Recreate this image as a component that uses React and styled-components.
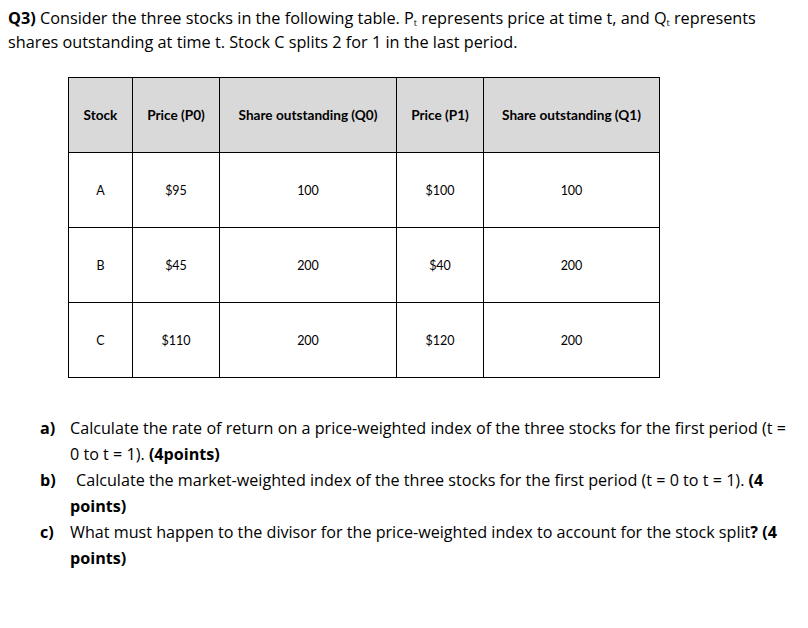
import React from 'react'
import styled, { createGlobalStyle } from 'styled-components'

const GlobalStyle = createGlobalStyle`
  html, body {
    margin: 0;
    padding: 0;
    background: #ffffff;
  }
  body {
    font-family: "Open Sans", Lato, sans-serif;
    color: #000;
  }
`

const Page = styled.div`
  width: 808px;
  height: 628px;
  padding: 6px 0 0 8px;
  box-sizing: border-box;
`

const Intro = styled.p`
  margin: 0;
  font-size: 16.25px;
  line-height: 24px;
  span.line {
    display: block;
    white-space: nowrap;
  }
  b {
    font-weight: 700;
  }
  sub {
    font-size: 9px;
    line-height: 0;
    vertical-align: -2px;
  }
`

const Table = styled.table`
  margin: 23px 0 0 60px;
  border-collapse: collapse;
  font-family: Lato, "Open Sans", sans-serif;
  th, td {
    border: 1.5px solid #000;
    text-align: center;
    vertical-align: middle;
    height: 74px;
    padding: 0;
  }
  th {
    background: #d9d9d9;
    font-weight: 700;
    font-size: 13.6px;
  }
  td {
    font-size: 12.5px;
  }
`

const Col = styled.col`
  width: ${p => p.$w}px;
`

const Questions = styled.ol`
  list-style: none;
  margin: 37px 0 0 32px;
  padding: 0;
  font-size: 16.15px;
  line-height: 26px;
`

const Item = styled.li`
  display: flex;
  white-space: nowrap;
`

const Label = styled.span`
  font-weight: 700;
  width: 30px;
  flex: none;
`

const Body = styled.div``

const Line = styled.span`
  display: block;
  padding-left: ${p => p.$indent || 0}px;
`

const rows = [
  ['A', '$95', '100', '$100', '100'],
  ['B', '$45', '200', '$40', '200'],
  ['C', '$110', '200', '$120', '200'],
]

export default function App() {
  return (
    <Page>
      <GlobalStyle />
      <Intro>
        <span className="line">
          <b>Q3)</b> Consider the three stocks in the following table. P<sub>t</sub> represents price at time t, and Q<sub>t</sub> represents
        </span>
        <span className="line">shares outstanding at time t. Stock C splits 2 for 1 in the last period.</span>
      </Intro>

      <Table>
        <colgroup>
          <Col $w={64} />
          <Col $w={87} />
          <Col $w={177} />
          <Col $w={87} />
          <Col $w={176} />
        </colgroup>
        <thead>
          <tr>
            <th>Stock</th>
            <th>Price (P0)</th>
            <th>Share outstanding (Q0)</th>
            <th>Price (P1)</th>
            <th>Share outstanding (Q1)</th>
          </tr>
        </thead>
        <tbody>
          {rows.map(r => (
            <tr key={r[0]}>
              {r.map((c, i) => <td key={i}>{c}</td>)}
            </tr>
          ))}
        </tbody>
      </Table>

      <Questions>
        <Item>
          <Label>a)</Label>
          <Body>
            <Line>Calculate the rate of return on a price-weighted index of the three stocks for the first period (t =</Line>
            <Line>0 to t = 1). <b>(4points)</b></Line>
          </Body>
        </Item>
        <Item>
          <Label>b)</Label>
          <Body>
            <Line $indent={6}>Calculate the market-weighted index of the three stocks for the first period (t = 0 to t = 1). <b>(4</b></Line>
            <Line><b>points)</b></Line>
          </Body>
        </Item>
        <Item>
          <Label>c)</Label>
          <Body>
            <Line>What must happen to the divisor for the price-weighted index to account for the stock split<b>? (4</b></Line>
            <Line><b>points)</b></Line>
          </Body>
        </Item>
      </Questions>
    </Page>
  )
}
